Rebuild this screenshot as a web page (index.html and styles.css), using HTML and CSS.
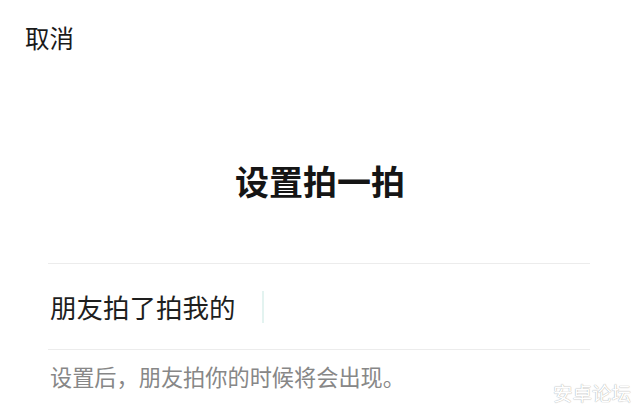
FILE: index.html
```html
<!DOCTYPE html>
<html lang="zh-CN">
<head>
<meta charset="utf-8">
<title>设置拍一拍</title>
<link rel="stylesheet" href="styles.css">
</head>
<body>
<div class="page">
  <div class="header"><span class="cancel">取消</span></div>
  <h1 class="title">设置拍一拍</h1>
  <div class="divider"></div>
  <div class="input-row">
    <span class="input-text">朋友拍了拍我的</span>
    <span class="cursor"></span>
  </div>
  <div class="divider"></div>
  <p class="hint">设置后，朋友拍你的时候将会出现。</p>
  <div class="watermark">安卓论坛</div>
</div>
</body>
</html>
```
FILE: styles.css
```css
html, body {
  margin: 0;
  padding: 0;
  background: #ffffff;
}
.page {
  position: relative;
  width: 640px;
  height: 416px;
  overflow: hidden;
  font-family: "Noto Sans CJK SC", "Noto Sans", sans-serif;
  display: flex;
  flex-direction: column;
}
.header {
  height: 76px;
  line-height: 76px;
  padding-left: 25px;
}
.cancel {
  font-size: 24.5px;
  color: #1a1a1a;
}
.title {
  margin: 62px 0 39px;
  height: 86px;
  line-height: 86px;
  text-align: center;
  font-size: 34px;
  font-weight: 700;
  color: #151515;
}
.divider {
  height: 1px;
  margin: 0 50px 0 48px;
  background: #ececec;
}
.input-row {
  height: 85px;
  padding-left: 50px;
  display: flex;
  align-items: center;
}
.input-text {
  font-size: 26.5px;
  color: #1e1e1e;
  width: 212px;
}
.cursor {
  width: 2px;
  height: 32px;
  background: #e3f3f0;
}
.hint {
  margin: 0;
  padding-left: 50px;
  height: 52px;
  line-height: 52px;
  font-size: 22.2px;
  color: #878787;
}
.watermark {
  position: absolute;
  right: 9px;
  top: 378px;
  font-size: 19.5px;
  color: #ffffff;
  text-shadow: 0 0 1px #a8a8a8, 0 0 1px #c8c8c8;
}
```
